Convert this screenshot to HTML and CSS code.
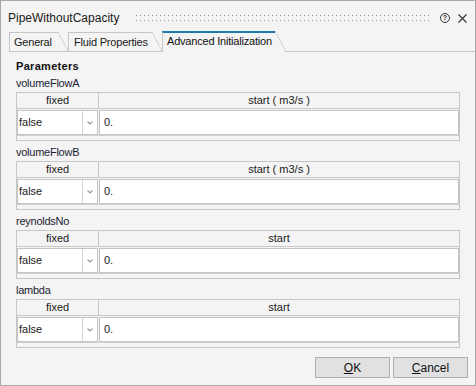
FILE: index.html
```html
<!DOCTYPE html>
<html lang="en">
<head>
    <meta charset="UTF-8">
    <meta name="viewport" content="width=device-width, initial-scale=1.0">
    <title>PipeWithoutCapacity</title>
    <link rel="stylesheet" href="styles.css">
</head>
<body>

<div class="dialog">
    <div class="titlebar">
        <span class="title">PipeWithoutCapacity</span>
        <span class="grip"></span>
        <span class="help">?</span>
        <svg class="close" width="9" height="9" viewBox="0 0 9 9">
            <path d="M0.5 0.5 L8.5 8.5 M8.5 0.5 L0.5 8.5" stroke="#333" stroke-width="1.1" fill="none"/>
        </svg>
    </div>

    <div class="tabs">
        <div class="tab"><span class="tab-label tab-general">General</span><span class="tab-slant"></span></div>
        <div class="tab"><span class="tab-label tab-fluid">Fluid Properties</span><span class="tab-slant"></span></div>
        <div class="tab active"><span class="tab-label tab-init">Advanced Initialization</span><span class="tab-slant"></span></div>
        <div class="tab-fill"></div>
    </div>

    <div class="pane">
        <div class="section-title">Parameters</div>

        <div class="param">
            <div class="param-name">volumeFlowA</div>
            <div class="grid">
                <div class="grid-head">
                    <div class="col-fixed">fixed</div>
                    <div class="col-start">start ( m3/s )</div>
                </div>
                <div class="grid-row">
                    <div class="combo">
                        <span class="combo-value">false</span>
                        <span class="combo-arrow"><svg width="6" height="4" viewBox="0 0 6 4"><path d="M0.5 0.5 L3 3 L5.5 0.5" stroke="#9a9a9a" stroke-width="1.2" fill="none"/></svg></span>
                    </div>
                    <div class="value">0.</div>
                </div>
                <div class="grid-foot"></div>
            </div>
        </div>

        <div class="param">
            <div class="param-name">volumeFlowB</div>
            <div class="grid">
                <div class="grid-head">
                    <div class="col-fixed">fixed</div>
                    <div class="col-start">start ( m3/s )</div>
                </div>
                <div class="grid-row">
                    <div class="combo">
                        <span class="combo-value">false</span>
                        <span class="combo-arrow"><svg width="6" height="4" viewBox="0 0 6 4"><path d="M0.5 0.5 L3 3 L5.5 0.5" stroke="#9a9a9a" stroke-width="1.2" fill="none"/></svg></span>
                    </div>
                    <div class="value">0.</div>
                </div>
                <div class="grid-foot"></div>
            </div>
        </div>

        <div class="param">
            <div class="param-name">reynoldsNo</div>
            <div class="grid">
                <div class="grid-head">
                    <div class="col-fixed">fixed</div>
                    <div class="col-start">start</div>
                </div>
                <div class="grid-row">
                    <div class="combo">
                        <span class="combo-value">false</span>
                        <span class="combo-arrow"><svg width="6" height="4" viewBox="0 0 6 4"><path d="M0.5 0.5 L3 3 L5.5 0.5" stroke="#9a9a9a" stroke-width="1.2" fill="none"/></svg></span>
                    </div>
                    <div class="value">0.</div>
                </div>
                <div class="grid-foot"></div>
            </div>
        </div>

        <div class="param">
            <div class="param-name">lambda</div>
            <div class="grid">
                <div class="grid-head">
                    <div class="col-fixed">fixed</div>
                    <div class="col-start">start</div>
                </div>
                <div class="grid-row">
                    <div class="combo">
                        <span class="combo-value">false</span>
                        <span class="combo-arrow"><svg width="6" height="4" viewBox="0 0 6 4"><path d="M0.5 0.5 L3 3 L5.5 0.5" stroke="#9a9a9a" stroke-width="1.2" fill="none"/></svg></span>
                    </div>
                    <div class="value">0.</div>
                </div>
                <div class="grid-foot"></div>
            </div>
        </div>
    </div>

    <div class="buttons">
        <button class="btn"><u>O</u>K</button>
        <button class="btn"><u>C</u>ancel</button>
    </div>
</div>

</body>
</html>
```

FILE: styles.css
```css
body {
    margin: 0;
    font-family: "Liberation Sans", Arial, sans-serif;
    color: #1a1a1a;
}
.dialog {
    width: 476px;
    height: 386px;
    box-sizing: border-box;
    border: 1px solid #a9a9a9;
    background-color: #f4f4f4;
    display: flex;
    flex-direction: column;
}

/* Title bar */
.titlebar {
    height: 30px;
    box-sizing: border-box;
    padding: 4px 8px 0 7px;
    display: flex;
    align-items: center;
}
.title {
    font-size: 12px;
}
.grip {
    flex: 1;
    height: 6px;
    margin: 0 10px 0 14px;
    background-image:
        linear-gradient(to right, #f4f4f4 3px, transparent 3px),
        linear-gradient(to bottom, #8a8a8a 1px, transparent 1px);
    background-size: 4px 5px;
}
.help {
    width: 8px;
    height: 8px;
    border: 1px solid #333;
    border-radius: 50%;
    font-size: 7px;
    font-weight: bold;
    line-height: 8px;
    text-align: center;
    color: #333;
}
.close {
    margin-left: 8px;
}

/* Tabs */
.tabs {
    height: 21px;
    display: flex;
    align-items: flex-end;
    padding-left: 8px;
    font-size: 11px;
    letter-spacing: -0.2px;
}
.tab {
    display: flex;
    height: 20px;
    box-sizing: border-box;
    border-bottom: 1px solid #c6c6c6;
}
.tab-label {
    border-top: 1px solid #c6c6c6;
    border-left: 1px solid #c6c6c6;
    padding-left: 4px;
    line-height: 18px;
    box-sizing: border-box;
}
.tab-general { width: 49px; }
.tab-fluid { width: 84px; padding-left: 5px; }
.tab-init { width: 113px; }
.tab-slant {
    width: 10px;
    background: linear-gradient(to top right, transparent calc(50% - 0.7px), #c6c6c6 50%, transparent calc(50% + 0.7px));
}
.tab.active {
    height: 21px;
    border-bottom: none;
}
.tab.active .tab-label {
    border-top: 2px solid #2179ae;
    line-height: 17px;
    color: #111;
}
.tab.active .tab-slant {
    width: 11px;
}
.tab-fill {
    flex: 1;
    border-bottom: 1px solid #c6c6c6;
}

/* Pane */
.pane {
    flex: 1;
    padding: 7px 15px 0 15px;
    font-size: 11px;
}
.section-title {
    font-weight: bold;
    letter-spacing: 0.3px;
    line-height: 14px;
    color: #111;
}
.param {
    margin-top: 3px;
}
.param + .param {
    margin-top: 4px;
}
.param-name {
    line-height: 14px;
    letter-spacing: -0.25px;
    color: #1c2233;
}
.grid {
    margin-top: 2px;
    border: 1px solid #c6c6c6;
}
.grid-head {
    display: flex;
    height: 15px;
    line-height: 15px;
    border-bottom: 1px solid #c8c8c8;
    text-align: center;
}
.col-fixed {
    width: 81px;
    border-right: 1px solid #c8c8c8;
}
.col-start {
    flex: 1;
}
.grid-row {
    display: flex;
    padding-top: 1px;
    gap: 1px;
    height: 26px;
    box-sizing: border-box;
}
.combo {
    width: 81px;
    box-sizing: border-box;
    display: flex;
    border: 1px solid #c4c4c4;
    background-color: #fff;
}
.combo-value {
    flex: 1;
    padding-left: 1px;
    line-height: 23px;
}
.combo-arrow {
    width: 14px;
    border-left: 1px solid #d4d4d4;
    display: flex;
    align-items: center;
    justify-content: center;
}
.value {
    flex: 1;
    border: 1px solid #c4c4c4;
    background-color: #fff;
    padding-left: 4px;
    line-height: 23px;
}
.grid-foot {
    height: 4px;
    border-top: 1px solid #d0d0d0;
}

/* Buttons */
.buttons {
    display: flex;
    justify-content: flex-end;
    gap: 3px;
    padding: 0 7px 7px 0;
}
.btn {
    width: 75px;
    height: 21px;
    border: 1px solid #adadad;
    background-color: #e1e1e1;
    font-family: "Liberation Sans", Arial, sans-serif;
    font-size: 12px;
    color: #111;
    padding: 0;
}
```
